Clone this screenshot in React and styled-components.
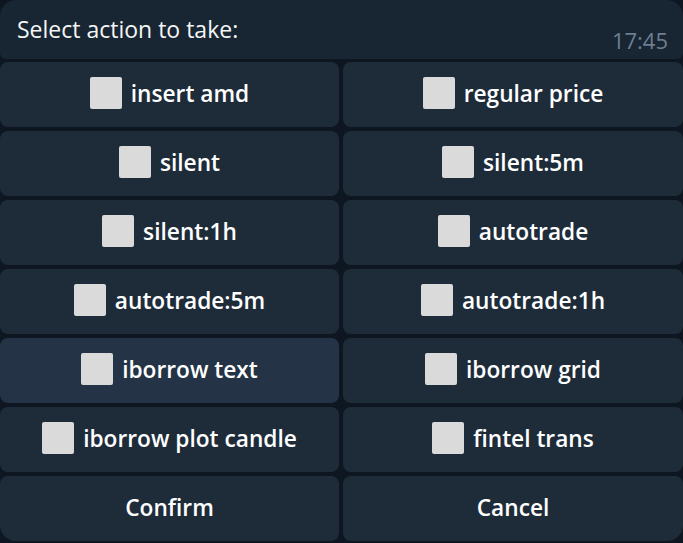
import styled, { createGlobalStyle } from "styled-components";

const GlobalStyle = createGlobalStyle`
  html, body {
    margin: 0;
    padding: 0;
    background: #0e1621;
    overflow: hidden;
  }
  body {
    font-family: "Open Sans", "Noto Sans", sans-serif;
  }
`;

const Message = styled.div`
  width: 683px;
  height: 543px;
  display: flex;
  flex-direction: column;
  gap: 3px;
`;

const Bubble = styled.div`
  height: 59px;
  background: #182533;
  border-radius: 16px 16px 6px 6px;
  display: flex;
  justify-content: space-between;
  padding: 0 15px 0 17px;
  box-sizing: border-box;
`;

const BubbleText = styled.div`
  color: #f5f5f5;
  font-size: 23px;
  line-height: 30px;
  padding-top: 14px;
`;

const Time = styled.div`
  color: #6d7f8f;
  font-size: 22px;
  line-height: 28px;
  align-self: flex-end;
  padding-bottom: 5px;
`;

const Keyboard = styled.div`
  display: grid;
  grid-template-columns: 339px 340px;
  grid-auto-rows: 65px;
  gap: 4px;
`;

const KeyButton = styled.button`
  border: none;
  margin: 0;
  padding: 0 0 3px;
  background: ${(p) => (p.$hover ? "#243345" : "#1e2c3a")};
  border-radius: ${(p) =>
    p.$corner === "left"
      ? "8px 8px 8px 16px"
      : p.$corner === "right"
      ? "8px 8px 16px 8px"
      : "8px"};
  color: #ffffff;
  font-family: "Open Sans", "Noto Sans", sans-serif;
  font-weight: 600;
  font-size: 22.7px;
  display: flex;
  align-items: center;
  justify-content: center;
  gap: 9px;
  cursor: pointer;
`;

const Box = styled.span`
  width: 32px;
  height: 32px;
  background: #dadada;
  border-radius: 2px;
  flex: none;
`;

const options = [
  "insert amd",
  "regular price",
  "silent",
  "silent:5m",
  "silent:1h",
  "autotrade",
  "autotrade:5m",
  "autotrade:1h",
  "iborrow text",
  "iborrow grid",
  "iborrow plot candle",
  "fintel trans",
];

export default function App() {
  return (
    <>
      <GlobalStyle />
      <Message>
        <Bubble>
          <BubbleText>Select action to take:</BubbleText>
          <Time>17:45</Time>
        </Bubble>
        <Keyboard>
          {options.map((label) => (
            <KeyButton key={label} $hover={label === "iborrow text"}>
              <Box />
              {label}
            </KeyButton>
          ))}
          <KeyButton $corner="left">Confirm</KeyButton>
          <KeyButton $corner="right">Cancel</KeyButton>
        </Keyboard>
      </Message>
    </>
  );
}
